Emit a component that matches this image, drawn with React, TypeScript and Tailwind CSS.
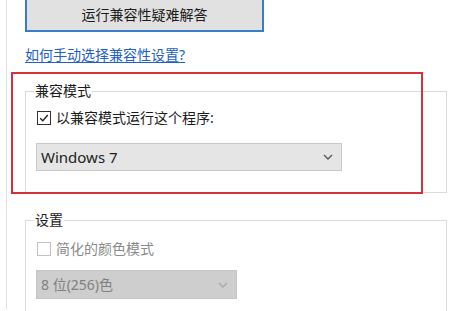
import React from 'react'

function Chevron({ color }: { color: string }) {
  return (
    <svg width="10" height="6" viewBox="0 0 10 6" className="shrink-0">
      <polyline points="1,1 5,5 9,1" fill="none" stroke={color} strokeWidth="1.3" />
    </svg>
  )
}

function CheckBox({ checked, disabled }: { checked?: boolean; disabled?: boolean }) {
  return (
    <span
      className={
        disabled
          ? 'flex h-[14px] w-[14px] shrink-0 items-center justify-center border border-[#c2c2c2] bg-white'
          : 'flex h-[14px] w-[14px] shrink-0 items-center justify-center border border-[#333333] bg-white'
      }
    >
      {checked && (
        <svg width="10" height="10" viewBox="0 0 10 10">
          <polyline points="1.2,5.2 3.8,7.8 8.8,2" fill="none" stroke="#222" strokeWidth="1.4" />
        </svg>
      )}
    </span>
  )
}

export default function App() {
  return (
    <div className="relative h-[311px] w-[465px] overflow-hidden bg-white font-['Noto_Sans','Noto_Sans_CJK_SC',sans-serif] text-[14px] text-[#1b1b1b]">
      <div className="ml-[6px] h-full border-l border-[#e0e0e0] pl-[18px] pr-[18px]">
        {/* troubleshooter button */}
        <button className="-mt-[2px] flex h-[34px] w-[239px] items-center justify-center border-2 border-[#3a7ccc] bg-[#e1e1e1] leading-none text-[#1b1b1b]">
          运行兼容性疑难解答
        </button>

        <a className="mt-[13px] block w-fit text-[14px] leading-[20px] text-[#2160c4] underline underline-offset-2">
          如何手动选择兼容性设置?
        </a>

        {/* compatibility mode */}
        <div className="mt-[26px] h-[102px] w-[422px] border border-[#dcdcdc] pl-[10px]">
          <div className="-ml-[2px] -mt-[9px] w-fit bg-white px-[1px] text-[14px] leading-[16px]">兼容模式</div>
          <div className="mt-[9px] flex h-[20px] items-center gap-[5px] pl-[1px]">
            <CheckBox checked />
            <span className="leading-[20px]">以兼容模式运行这个程序:</span>
          </div>
          <div className="mt-[15px] flex h-[28px] w-[306px] items-center justify-between border border-[#c9c9c9] bg-[#e5e5e5] pl-[4px] pr-[8px]">
            <span className="text-[15px] text-[#222]">Windows 7</span>
            <Chevron color="#555" />
          </div>
        </div>

        {/* settings */}
        <div className="mt-[27px] h-[120px] w-[422px] border border-[#dcdcdc] pl-[10px]">
          <div className="-ml-[2px] -mt-[9px] w-fit bg-white px-[1px] text-[14px] leading-[16px]">设置</div>
          <div className="mt-[11px] flex h-[20px] items-center gap-[5px] pl-[1px]">
            <CheckBox disabled />
            <span className="leading-[20px] text-[#8a8a8a]">简化的颜色模式</span>
          </div>
          <div className="mt-[11px] flex h-[29px] w-[201px] items-center justify-between border border-[#c6c6c6] bg-[#cecece] pl-[4px] pr-[8px]">
            <span className="text-[14px] text-[#808080]">8 位(256)色</span>
            <Chevron color="#a8a8a8" />
          </div>
        </div>
      </div>

      {/* red highlight annotation */}
      <div className="pointer-events-none absolute left-[11px] top-[72px] h-[122px] w-[412px] border-2 border-[#d3313b]" />
    </div>
  )
}
